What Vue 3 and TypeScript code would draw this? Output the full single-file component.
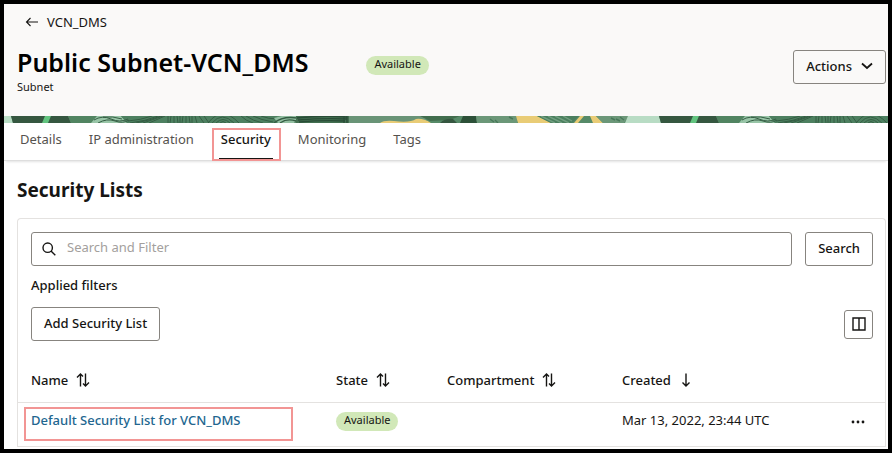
<script setup lang="ts">
import { ref } from 'vue'

interface Tab {
  id: string
  label: string
}

interface Column {
  id: string
  label: string
  sort: 'both' | 'down'
}

interface SecurityList {
  name: string
  state: string
  compartment: string
  created: string
}

const tabs: Tab[] = [
  { id: 'details', label: 'Details' },
  { id: 'ip', label: 'IP administration' },
  { id: 'security', label: 'Security' },
  { id: 'monitoring', label: 'Monitoring' },
  { id: 'tags', label: 'Tags' },
]

const columns: Column[] = [
  { id: 'name', label: 'Name', sort: 'both' },
  { id: 'state', label: 'State', sort: 'both' },
  { id: 'compartment', label: 'Compartment', sort: 'both' },
  { id: 'created', label: 'Created', sort: 'down' },
]

const lists: SecurityList[] = [
  {
    name: 'Default Security List for VCN_DMS',
    state: 'Available',
    compartment: '',
    created: 'Mar 13, 2022, 23:44 UTC',
  },
]

const activeTab = ref('security')
const query = ref('')
</script>

<template>
  <div class="frame">
    <header class="header">
      <a class="back" href="#">
        <svg class="back-icon" viewBox="0 0 14 10" aria-hidden="true">
          <path d="M13 5H1.5M5.5 1L1.5 5l4 4" />
        </svg>
        <span>VCN_DMS</span>
      </a>
      <div class="title-row">
        <div class="title-block">
          <h1 class="title">Public Subnet-VCN_DMS</h1>
          <p class="subtitle">Subnet</p>
        </div>
        <span class="pill">Available</span>
        <button class="button actions" type="button">
          <span>Actions</span>
          <svg class="chevron" viewBox="0 0 12 8" aria-hidden="true">
            <path d="M1 1.5l5 4.5 5-4.5" />
          </svg>
        </button>
      </div>
    </header>

    <svg class="banner" aria-hidden="true">
      <defs>
        <pattern id="banner-art" width="648" height="7" patternUnits="userSpaceOnUse" patternTransform="translate(-4 0)">
          <rect width="648" height="7" fill="#568a68" />
          <path d="M0 0H11L13 7H0z" fill="#b8dcc4" />
          <path d="M11 0H68L71 7H13z" fill="#355740" />
          <path d="M45 0h6l-3 7h-6z" fill="#62c47f" />
          <path d="M68 0h29l-5 7H71z" fill="#518461" />
          <path d="M97 0h24l6 7H91z" fill="#98c5a7" />
          <path d="M121 0h156v7H127z" fill="#4d8060" />
          <g fill="none" stroke="#345d43" stroke-width="1">
            <path d="M94 4q8-5 17-1t17 0M98 7q9-5 17-2t14-1M103 1q10-1 19 2" />
            <path d="M128 5q13-1 24-5M130 7q16-2 28-7M136 7q15-3 25-7M143 7l20-7M149 7l16-7" />
            <path d="M168 0v7M171 0l-1 7M174 0v7M177 0l1 7M180 0v7M183 0l-1 7M186 0v7M189 0l1 7M192 0v7M195 0l2 7" />
            <path d="M199 0l5 7M204 0l5 7M212 7q10-12 22 0M208 7q14-18 31 0M216 7q7-7 14 0M220 7q3-3 6 0" />
            <path d="M241 0q5 5 12 7M246 0q7 5 17 7M253 0q8 4 20 6M261 0q7 3 17 3" />
          </g>
          <path d="M274 2l8-2h17l-5 7h-16z" fill="#94c0a3" />
          <path d="M274 7q8-7 23-5M280 7q7-5 16-2" fill="none" stroke="#345d43" />
          <path d="M296 0h53v7h-53z" fill="#426f50" />
          <path d="M297 2q25-3 50-1M298 4q25-2 49-1M299 6q23-2 46-1M344 0v7M347 0v7" fill="none" stroke="#294d37" />
          <path d="M349 0h77v7h-77z" fill="#699477" />
          <path d="M380 7q4-3 14-2 16 2 22-2 7-1 15 4z" fill="#e9cc76" />
          <path d="M420 0h40l-10 4-20 1z" fill="#416d4d" />
          <path d="M440 7q5-5 13-4l4 4z" fill="#355740" />
          <path d="M463 0h13l1 7h-17z" fill="#2c5038" />
          <path d="M476 0h42l-1 7h-40z" fill="#6b9778" />
          <path d="M490 3l4 3M495 4l3 3M509 1l4 2" stroke="#477859" />
          <path d="M516 0h21l14 7h-33z" fill="#e9cc76" />
          <path d="M537 0h42l-7 7h-21z" fill="#4a7f5e" />
          <path d="M541 0l14 7M548 0l14 7M555 0l14 7M563 0l9 5" stroke="#719f80" />
          <path d="M580 0h4l-6 7h-4z" fill="#e9cc76" />
          <path d="M590 0h6l7 7h-10z" fill="#e9cc76" />
          <path d="M596 0h33l-5 7h-21z" fill="#6b9778" />
          <path d="M611 2l4 2M616 3l4 2M620 1l4 3" stroke="#477859" />
          <path d="M628 0H648V7H625z" fill="#b8dcc4" />
        </pattern>
      </defs>
      <rect width="100%" height="7" fill="url(#banner-art)" />
    </svg>

    <nav class="tabs" aria-label="Subnet sections">
      <button
        v-for="tab in tabs"
        :key="tab.id"
        type="button"
        class="tab"
        :class="{ active: tab.id === activeTab }"
        @click="activeTab = tab.id"
      >
        {{ tab.label }}
      </button>
    </nav>

    <main class="content">
      <h2 class="section-title">Security Lists</h2>
      <section class="card">
        <form class="search-row" @submit.prevent>
          <div class="search-field">
            <svg class="search-icon" viewBox="0 0 14 14" aria-hidden="true">
              <circle cx="5.7" cy="5.7" r="4.7" />
              <path d="M9 9l4.3 4.3" />
            </svg>
            <input
              v-model="query"
              class="search-input"
              type="text"
              placeholder="Search and Filter"
              aria-label="Search and Filter"
            />
          </div>
          <button class="button" type="submit">Search</button>
        </form>
        <p class="filters">Applied filters</p>
        <div class="toolbar">
          <button class="button" type="button">Add Security List</button>
          <button class="button icon-button" type="button" aria-label="Manage columns">
            <svg class="columns-icon" viewBox="0 0 14 14" aria-hidden="true">
              <path d="M1 1h12v12H1zM7 1v12" />
            </svg>
          </button>
        </div>
        <table class="table">
          <colgroup>
            <col class="col-name" />
            <col class="col-state" />
            <col class="col-compartment" />
            <col />
            <col class="col-menu" />
          </colgroup>
          <thead>
            <tr>
              <th v-for="column in columns" :key="column.id" scope="col">
                <button class="sort" type="button">
                  <span>{{ column.label }}</span>
                  <svg v-if="column.sort === 'both'" class="sort-icon" viewBox="0 0 14 14" aria-hidden="true">
                    <path d="M4.5 13.5V1M1 4.5L4.5 1 7 3.5M9.5 .5V13M7 10.5L9.5 13 13 9.5" />
                  </svg>
                  <svg v-else class="sort-icon" viewBox="0 0 14 14" aria-hidden="true">
                    <path d="M7 .5V13M3.5 9.5L7 13l3.5-3.5" />
                  </svg>
                </button>
              </th>
              <td></td>
            </tr>
          </thead>
          <tbody>
            <tr v-for="list in lists" :key="list.name">
              <td class="name-cell"><a class="link" href="#">{{ list.name }}</a></td>
              <td><span class="pill">{{ list.state }}</span></td>
              <td>{{ list.compartment }}</td>
              <td>{{ list.created }}</td>
              <td>
                <button class="menu" type="button" aria-label="Row actions">
                  <svg class="dots" viewBox="0 0 14 4" aria-hidden="true">
                    <circle cx="2" cy="2" r="1.4" />
                    <circle cx="7" cy="2" r="1.4" />
                    <circle cx="12" cy="2" r="1.4" />
                  </svg>
                </button>
              </td>
            </tr>
          </tbody>
        </table>
      </section>
    </main>
  </div>
</template>

<style>
body {
  margin: 0;
  background: #fff;
}
</style>

<style scoped>
.frame {
  box-sizing: border-box;
  min-height: 100vh;
  display: flex;
  flex-direction: column;
  border: 4px solid #000;
  background: #fff;
  color: #161513;
  font-family: 'Noto Sans', 'Open Sans', sans-serif;
  font-size: 13px;
  line-height: 18px;
}

button,
input {
  font: inherit;
  color: inherit;
}

button {
  cursor: pointer;
}

svg {
  display: block;
  flex: none;
  fill: none;
  stroke: #161513;
  stroke-width: 1.4;
}

.header {
  padding: 9px 2px 22px 13px;
  background: #faf9f8;
}

.back {
  display: flex;
  align-items: center;
  gap: 8px;
  width: max-content;
  padding-left: 8px;
  color: #161513;
  text-decoration: none;
}

.back-icon {
  width: 14px;
  height: 10px;
  stroke-width: 1.1;
}

.title-row {
  display: flex;
  align-items: flex-start;
  margin-top: 14px;
}

.title {
  margin: 0;
  color: #000;
  font-size: 25px;
  font-weight: 600;
  line-height: 34px;
}

.subtitle {
  margin: 0;
  font-size: 11px;
  line-height: 15px;
}

.title-row .pill {
  margin: 11px 0 0 58px;
}

.pill {
  display: inline-block;
  box-sizing: border-box;
  height: 19px;
  padding: 0 8px;
  border-radius: 10px;
  background: #d1e8b8;
  font-size: 11px;
  line-height: 16px;
}

.button {
  box-sizing: border-box;
  height: 34px;
  padding: 0 12px 2px;
  border: 1px solid #87847f;
  border-radius: 3px;
  background: transparent;
  font-weight: 500;
}

.actions {
  display: flex;
  align-items: center;
  gap: 9px;
  margin: 5px 0 0 auto;
}

.chevron {
  width: 12px;
  height: 8px;
  stroke-width: 1.8;
}

.banner {
  width: 100%;
  height: 7px;
  stroke: none;
}

.tabs {
  display: flex;
  gap: 23px;
  padding: 0 14px;
  border-bottom: 1px solid #dedede;
  box-shadow: 0 3px 2px -2px #e4e4e4;
}

.tab {
  position: relative;
  height: 37px;
  padding: 0 2px 4px;
  border: 0;
  border-bottom: 2px solid transparent;
  background: none;
  color: #55524e;
}

.tab.active {
  border-bottom-color: #161513;
  color: #161513;
  font-weight: 500;
}

.tab.active::after,
.name-cell::after {
  content: '';
  position: absolute;
  box-sizing: border-box;
  border: 2px solid #f29594;
}

.tab.active::after {
  inset: 5px -8px -3px -7px;
}

.content {
  padding: 17px 2px 0 13px;
}

.section-title {
  margin: 0;
  font-size: 19px;
  font-weight: 700;
  line-height: 24px;
}

.card {
  margin-top: 16px;
  padding-top: 13px;
  border: 1px solid #e4e2e0;
  border-bottom: 0;
  border-radius: 4px 4px 0 0;
}

.search-row {
  display: flex;
  gap: 13px;
  padding: 0 12px 0 13px;
}

.search-field {
  flex: 1;
  display: flex;
  align-items: center;
  gap: 11px;
  box-sizing: border-box;
  height: 34px;
  padding: 0 10px;
  border: 1px solid #87847f;
  border-radius: 3px;
}

.search-icon {
  width: 14px;
  height: 14px;
}

.search-input {
  flex: 1;
  min-width: 0;
  padding: 0 0 4px;
  border: 0;
  outline: 0;
  background: transparent;
}

.search-input::placeholder {
  color: #a3a09d;
  opacity: 1;
}

.filters {
  margin: 10px 13px 13px;
  font-weight: 500;
}

.toolbar {
  display: flex;
  align-items: center;
  justify-content: space-between;
  padding: 0 12px 0 13px;
}

.icon-button {
  display: grid;
  place-items: center;
  width: 29px;
  height: 29px;
  padding: 0;
}

.columns-icon {
  width: 14px;
  height: 14px;
}

.table {
  width: 100%;
  margin-top: 17px;
  border-collapse: collapse;
  table-layout: fixed;
}

.col-name {
  width: 305px;
}

.col-state {
  width: 111px;
}

.col-compartment {
  width: 175px;
}

.col-menu {
  width: 53px;
}

th,
td {
  box-sizing: border-box;
  height: 44px;
  padding: 0 0 0 13px;
  border-bottom: 1px solid #e4e2e0;
  text-align: left;
  vertical-align: middle;
  white-space: nowrap;
}

tbody td {
  padding-bottom: 8px;
}

.sort {
  display: flex;
  align-items: center;
  gap: 8px;
  padding: 0;
  border: 0;
  background: none;
  font-weight: 500;
}

.sort-icon {
  width: 14px;
  height: 14px;
}

.name-cell {
  position: relative;
}

.name-cell::after {
  inset: 4px 30px 5px 6px;
  pointer-events: none;
}

.link {
  color: #22668f;
  font-weight: 500;
  text-decoration: none;
}

.menu {
  display: block;
  padding: 12px 6px 8px;
  border: 0;
  background: none;
}

.dots {
  width: 14px;
  height: 4px;
  fill: #161513;
  stroke: none;
}
</style>
